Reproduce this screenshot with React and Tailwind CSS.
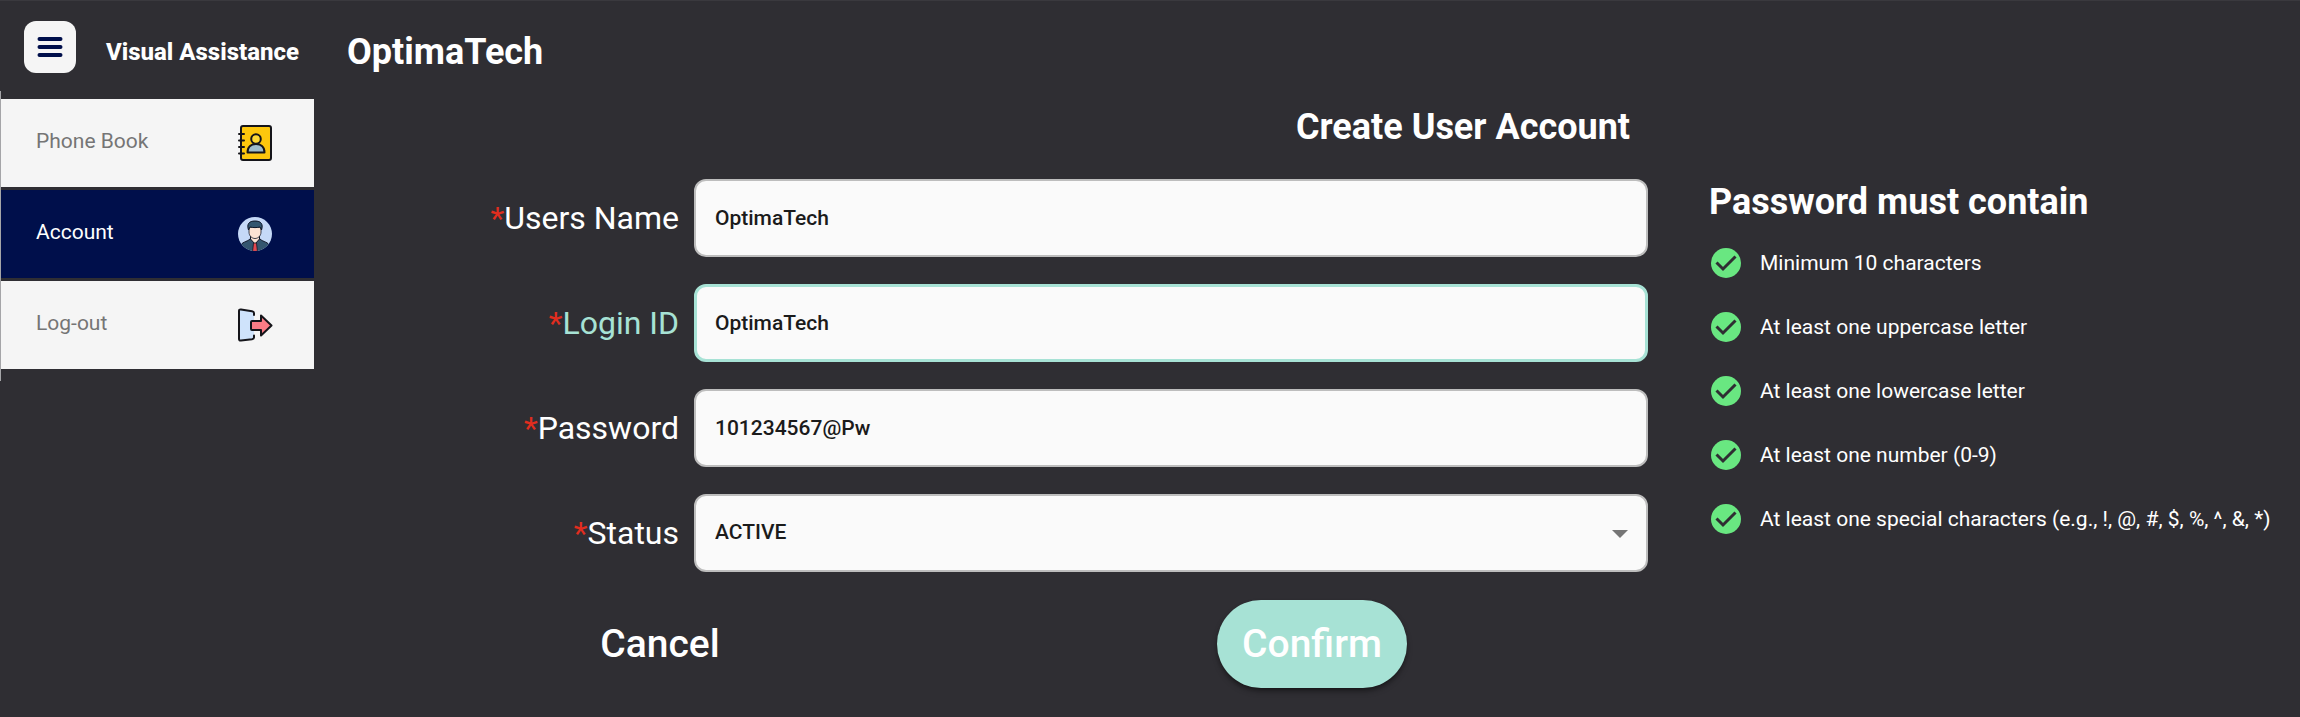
import React from "react";

const menuItems = [
  { label: "Phone Book", icon: PhoneBookIcon },
  { label: "Account", icon: AccountIcon, active: true },
  { label: "Log-out", icon: LogoutIcon },
];

const fields = [
  { id: "userName", label: "Users Name", value: "OptimaTech" },
  { id: "loginId", label: "Login ID", value: "OptimaTech", active: true },
  { id: "password", label: "Password", value: "101234567@Pw" },
];

const rules = [
  "Minimum 10 characters",
  "At least one uppercase letter",
  "At least one lowercase letter",
  "At least one number (0-9)",
  "At least one special characters (e.g., !, @, #, $, %, ^, &, *)",
];

function PhoneBookIcon() {
  return (
    <svg viewBox="0 0 36 38" className="h-[38px] w-9" fill="none" stroke="#15151a" strokeWidth="2" strokeLinecap="round">
      <rect x="4" y="2" width="30" height="34" rx="2" fill="#fdc70d" />
      <path d="M2 10h5M2 16.500h5M2 23h5M2 29.500h5" />
      <path d="M10.500 28.500c0-6 4-8.500 8.500-8.500s8.500 2.500 8.500 8.500z" fill="#9dbccb" strokeLinejoin="round" />
      <circle cx="19" cy="15" r="4.800" fill="#fdd835" />
    </svg>
  );
}

function AccountIcon() {
  return (
    <svg viewBox="0 0 36 36" className="h-9 w-9">
      <clipPath id="avatar">
        <circle cx="18" cy="18" r="17" />
      </clipPath>
      <g clipPath="url(#avatar)">
        <rect width="36" height="36" fill="#c5d9f7" />
        <path d="M4 36v-6c0-4 6-4 9-7h10c3 3 9 3 9 7v6z" fill="#34566f" stroke="#0f1626" />
        <path d="M13.500 23l4.500 5 4.500-5v-3h-9z" fill="#fde3d3" stroke="#0f1626" />
        <path d="M16.500 27h3l1 9h-5z" fill="#e4484f" stroke="#0f1626" strokeWidth="0.800" />
        <path d="M12 11v5c0 4 3 6.500 6 6.500s6-2.500 6-6.500v-5z" fill="#fde3d3" stroke="#0f1626" strokeWidth="0.800" />
        <path d="M11.500 14C9.500 8 12 5 18 5s8.500 3 6.500 9l-1.500-3c-3 .8-7 .8-10 0z" fill="#34566f" stroke="#0f1626" />
      </g>
    </svg>
  );
}

function LogoutIcon() {
  return (
    <svg viewBox="0 0 36 34" className="h-[34px] w-9" stroke="#15151a" strokeWidth="2" strokeLinejoin="round" strokeLinecap="round">
      <path d="M17 7V5c0-1-1-1.500-2-1.700L4 1.500C2.500 1.300 2 2 2 3v28c0 1 .5 1.700 2 1.500l11-1.300c1-.2 2-.7 2-1.700v-2z" fill="#cfe3fb" stroke="none" />
      <path d="M17 7V5c0-1-1-1.500-2-1.700L4 1.500C2.500 1.300 2 2 2 3v28c0 1 .5 1.700 2 1.500l11-1.300c1-.2 2-.7 2-1.700v-2" fill="none" />
      <path d="M15 13h9V7.500L34.500 17.500 24 27.500V22h-9c-.8 0-1-.4-1-1v-7c0-.6.2-1 1-1z" fill="#fb7c86" />
    </svg>
  );
}

function CheckIcon() {
  return (
    <svg viewBox="0 0 32 32" className="h-8 w-8 shrink-0">
      <circle cx="16" cy="16" r="15" fill="#69e781" />
      <path d="M6.500 15.500l6.500 6.500L25.500 9.500" fill="none" stroke="#2f2e33" strokeWidth="3" />
    </svg>
  );
}

function FieldLabel({ id, active, children }) {
  return (
    <label
      htmlFor={id}
      className={`w-[365px] shrink-0 text-right text-[32px] leading-10 ${active ? "text-[#a7e2d5]" : "text-white"}`}
    >
      <span className="text-[#e02d1f]">*</span>
      {children}
    </label>
  );
}

function Sidebar() {
  return (
    <nav className="-mt-2 flex w-[314px] shrink-0 flex-col gap-[3px] self-start border-l border-[#a5a5a8] pt-2 pb-3">
      {menuItems.map(({ label, icon: Icon, active }) => (
        <a
          key={label}
          href="#"
          className={`flex h-[88px] items-center justify-between pr-[41px] pl-[35px] text-[21px] ${
            active ? "bg-[#000f4b] text-white" : "bg-[#f5f5f5] text-[#757575]"
          }`}
        >
          <span className="pb-[2px]">{label}</span>
          <Icon />
        </a>
      ))}
    </nav>
  );
}

function AccountForm() {
  return (
    <form className="flex min-w-0 flex-1 flex-col">
      <h2 className="pr-[18px] text-right text-[36px] leading-10 font-bold">Create User Account</h2>
      <div className="mt-8 flex flex-col gap-[27px]">
        {fields.map(({ id, label, value, active }) => (
          <div key={id} className="flex items-center gap-[15px]">
            <FieldLabel id={id} active={active}>
              {label}
            </FieldLabel>
            <input
              id={id}
              type="text"
              defaultValue={value}
              className={`h-[78px] min-w-0 flex-1 rounded-xl bg-[#fafafa] text-[21px] font-medium text-[#1b1b1b] outline-none ${
                active ? "border-3 border-[#a7e2d5] px-[18px]" : "border-2 border-[#bdbdbd] px-[19px]"
              }`}
            />
          </div>
        ))}
        <div className="flex items-center gap-[15px]">
          <FieldLabel id="status">Status</FieldLabel>
          <div className="relative min-w-0 flex-1">
            <select
              id="status"
              defaultValue="ACTIVE"
              className="block h-[78px] w-full appearance-none rounded-xl border-2 border-[#bdbdbd] bg-[#fafafa] px-[19px] text-[21px] font-medium text-[#1b1b1b] outline-none"
            >
              <option>ACTIVE</option>
              <option>INACTIVE</option>
            </select>
            <svg viewBox="0 0 16 8" className="pointer-events-none absolute top-9 right-5 h-2 w-4" fill="#757575">
              <path d="M0 0h16l-8 8z" />
            </svg>
          </div>
        </div>
      </div>
      <div className="mt-7 mr-[10px] ml-5 grid grid-cols-2 items-center justify-items-center">
        <button type="button" className="text-[39px] font-medium">
          Cancel
        </button>
        <button
          type="submit"
          className="h-[88px] rounded-full bg-[#a7e2d5] px-[25px] text-[39px] font-medium shadow-md shadow-black/40"
        >
          Confirm
        </button>
      </div>
    </form>
  );
}

function PasswordRules() {
  return (
    <section className="w-[591px] shrink-0 pt-[74px]">
      <h2 className="text-[36px] leading-[42px] font-bold">Password must contain</h2>
      <ul className="mt-6 flex flex-col gap-8 pl-px">
        {rules.map((rule) => (
          <li key={rule} className="flex items-center gap-[18px] text-[21px] leading-8 whitespace-nowrap">
            <CheckIcon />
            {rule}
          </li>
        ))}
      </ul>
    </section>
  );
}

function App() {
  return (
    <div className="min-h-screen border-t border-[#3a393e] bg-[#2f2e33] font-[Roboto,sans-serif] text-white">
      <header className="flex h-[98px] items-start pt-5 pl-6">
        <button
          type="button"
          aria-label="Menu"
          className="flex h-[52px] w-[52px] items-center justify-center rounded-xl bg-[#f5f5f5]"
        >
          <svg viewBox="0 0 26 22" className="h-[22px] w-[26px]" stroke="#000f4b" strokeWidth="4" strokeLinecap="round">
            <path d="M2.500 3h21M2.500 11h21M2.500 19h21" />
          </svg>
        </button>
        <span className="ml-[30px] w-[241px] pt-[15px] text-[24px] leading-8 font-extrabold">Visual Assistance</span>
        <h1 className="pt-[10px] text-[36px] leading-[42px] font-bold">OptimaTech</h1>
      </header>
      <div className="flex">
        <Sidebar />
        <main className="flex min-w-0 flex-1 gap-[61px] pt-2">
          <AccountForm />
          <PasswordRules />
        </main>
      </div>
    </div>
  );
}

export default App;
